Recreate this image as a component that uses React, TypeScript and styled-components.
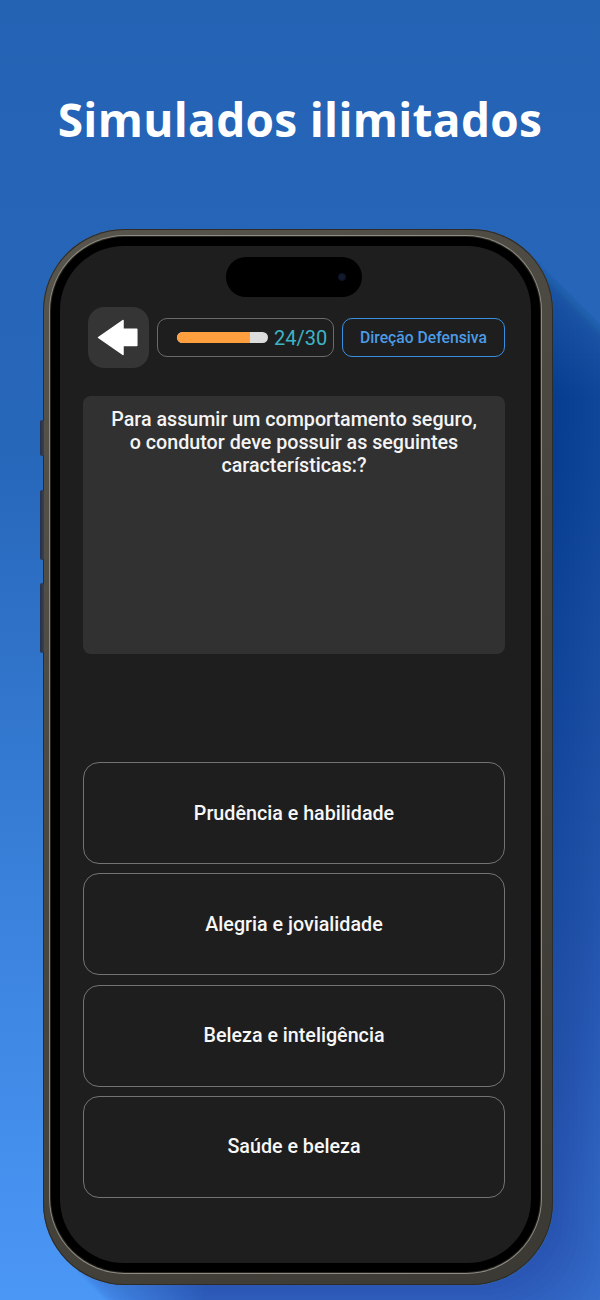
import React from "react";
import styled, { createGlobalStyle } from "styled-components";

const GlobalStyle = createGlobalStyle`
  html, body { margin: 0; padding: 0; }
  body {
    width: 600px;
    height: 1300px;
    overflow: hidden;
    font-family: Roboto, "Noto Sans", sans-serif;
  }
`;

const longShadow = Array.from(
  { length: 32 },
  (_, i) => `${(i + 1) * 5}px ${(i + 1) * 5}px 4px rgba(22, 40, 78, 0.011)`
).join(", ");

const Page = styled.div`
  width: 600px;
  height: 1300px;
  box-sizing: border-box;
  overflow: hidden;
  display: flex;
  flex-direction: column;
  align-items: flex-start;
  background: linear-gradient(180deg, #2462b4 0%, #2767ba 35%, #3a82dc 70%, #4b97f6 100%);
`;

const Title = styled.h1`
  align-self: stretch;
  margin: 88px 0 0;
  text-align: center;
  color: #ffffff;
  font-family: "Open Sans", "Noto Sans", sans-serif;
  font-weight: 700;
  font-size: 46px;
  line-height: 62px;
  letter-spacing: 0.3px;
`;

const Phone = styled.div`
  position: relative;
  margin: 79px 0 0 43px;
  width: 510px;
  height: 1056px;
  box-sizing: border-box;
  padding: 8px 13px 13px 8px;
  border-radius: 82px;
  background: linear-gradient(135deg, #58554d 0%, #48453e 50%, #3b3933 100%);
  box-shadow: inset 0 0 0 1px #2e2c28, ${longShadow};
`;

const SideKey = styled.div<{ $top: number; $h: number }>`
  position: absolute;
  left: -3px;
  top: ${(p) => p.$top}px;
  width: 4px;
  height: ${(p) => p.$h}px;
  border-radius: 2px;
  background: linear-gradient(90deg, #22304f, #3d4048);
`;

const Bezel = styled.div`
  height: 100%;
  box-sizing: border-box;
  padding: 9px;
  border-radius: 74px;
  background: #000;
  box-shadow: 0 0 0 1px #24231f, 0 0 0 2px #8e8b82;
`;

const Screen = styled.div`
  height: 100%;
  box-sizing: border-box;
  padding: 11px 26px 0 23px;
  border-radius: 64px;
  background: #1e1e1e;
  display: flex;
  flex-direction: column;
`;

const Island = styled.div`
  position: relative;
  align-self: center;
  width: 136px;
  height: 40px;
  border-radius: 20px;
  background: #000;
  flex-shrink: 0;
`;

const Camera = styled.span`
  position: absolute;
  left: 113px;
  top: 17px;
  width: 6px;
  height: 6px;
  border-radius: 50%;
  background: #141a2e;
  box-shadow: 0 0 0 1px #0d1020;
`;

const HeaderRow = styled.div`
  margin-top: 10px;
  padding-left: 5px;
  height: 61px;
  display: flex;
  align-items: center;
  gap: 8px;
  flex-shrink: 0;
`;

const BackButton = styled.div`
  width: 61px;
  height: 61px;
  border-radius: 16px;
  background: #353535;
  flex-shrink: 0;
  display: flex;
`;

const ProgressPill = styled.div`
  width: 177px;
  height: 39px;
  box-sizing: border-box;
  border: 1px solid #6b6b6b;
  border-radius: 10px;
  display: flex;
  align-items: center;
  gap: 6px;
  padding-left: 19px;
  flex-shrink: 0;
`;

const Bar = styled.div`
  width: 91px;
  height: 11px;
  border-radius: 6px;
  background: #dcdcdc;
  overflow: hidden;
  display: flex;
`;

const BarFill = styled.div`
  height: 100%;
  background: #ff9f3e;
  border-radius: 6px 0 0 6px;
`;

const Count = styled.span`
  font-size: 20px;
  color: #3db4c5;
  line-height: 1;
`;

const Tag = styled.div`
  flex: 1;
  height: 39px;
  box-sizing: border-box;
  border: 1.5px solid #3a8ee0;
  border-radius: 10px;
  display: flex;
  align-items: center;
  justify-content: center;
  color: #4c9be6;
  font-size: 15.7px;
  font-weight: 500;
`;

const QuestionCard = styled.div`
  margin-top: 28px;
  height: 258px;
  box-sizing: border-box;
  padding: 12px 24px;
  border-radius: 8px;
  background: #313131;
  color: #f4f4f4;
  text-align: center;
  font-size: 19.7px;
  line-height: 23px;
  font-weight: 500;
  flex-shrink: 0;
`;

const Answers = styled.div`
  margin-top: 108px;
  display: flex;
  flex-direction: column;
  gap: 9.33px;
`;

const Answer = styled.div`
  height: 102px;
  box-sizing: border-box;
  border: 1px solid #737373;
  border-radius: 16px;
  display: flex;
  align-items: center;
  justify-content: center;
  color: #f7f7f7;
  font-size: 19.7px;
  font-weight: 500;
`;

const answers = [
  "Prudência e habilidade",
  "Alegria e jovialidade",
  "Beleza e inteligência",
  "Saúde e beleza",
];

const current = 24;
const total = 30;

export default function App() {
  return (
    <>
      <GlobalStyle />
      <Page>
        <Title>Simulados ilimitados</Title>
        <Phone>
          <SideKey $top={191} $h={36} />
          <SideKey $top={261} $h={70} />
          <SideKey $top={354} $h={70} />
          <Bezel>
            <Screen>
              <Island>
                <Camera />
              </Island>
              <HeaderRow>
                <BackButton>
                  <svg width="61" height="61" viewBox="0 0 61 61">
                    <polygon
                      points="10.5,30.5 35,13.5 35,22.3 48.8,22.3 48.8,38.5 35,38.5 35,47.5"
                      fill="#ffffff"
                      stroke="#ffffff"
                      strokeWidth="1.5"
                      strokeLinejoin="round"
                    />
                  </svg>
                </BackButton>
                <ProgressPill>
                  <Bar>
                    <BarFill style={{ width: `${(current / total) * 100}%` }} />
                  </Bar>
                  <Count>
                    {current}/{total}
                  </Count>
                </ProgressPill>
                <Tag>Direção Defensiva</Tag>
              </HeaderRow>
              <QuestionCard>
                Para assumir um comportamento seguro, o condutor deve possuir as seguintes
                características:?
              </QuestionCard>
              <Answers>
                {answers.map((a) => (
                  <Answer key={a}>{a}</Answer>
                ))}
              </Answers>
            </Screen>
          </Bezel>
        </Phone>
      </Page>
    </>
  );
}
